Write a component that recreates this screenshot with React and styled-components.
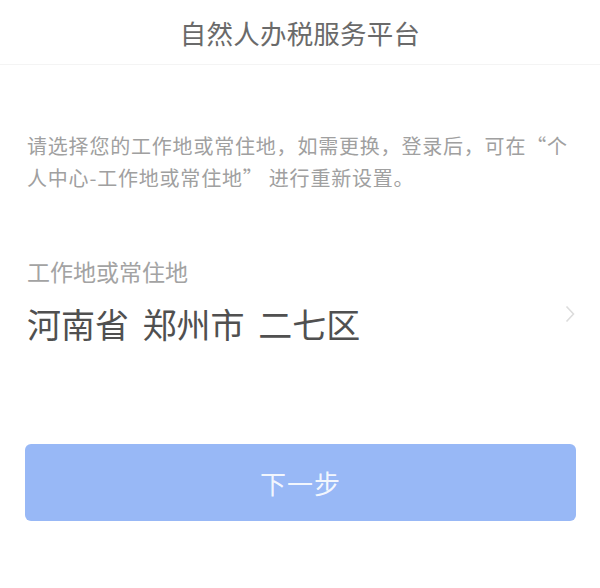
import React from "react";
import styled, { createGlobalStyle } from "styled-components";

const Global = createGlobalStyle`
  html, body {
    margin: 0;
    padding: 0;
    background: #ffffff;
  }
  body {
    font-family: "Noto Sans CJK SC", "Noto Sans", sans-serif;
  }
`;

const Page = styled.div`
  width: 600px;
  min-height: 588px;
  background: #fff;
  display: flex;
  flex-direction: column;
`;

const Header = styled.header`
  height: 64px;
  display: flex;
  align-items: center;
  justify-content: center;
  border-bottom: 1px solid #f4f4f4;
`;

const Title = styled.h1`
  margin: 0;
  font-size: 26.5px;
  font-weight: 400;
  color: #6a6a6a;
  letter-spacing: 0.2px;
`;

const Notice = styled.p`
  margin: 65px 25px 0 27px;
  font-size: 20px;
  letter-spacing: 0.8px;
  line-height: 32px;
  color: #a0a0a0;
`;

const Field = styled.section`
  margin-top: 62px;
  padding: 0 25px 0 27px;
  display: flex;
  flex-direction: column;
`;

const FieldLabel = styled.div`
  font-size: 23px;
  line-height: 30px;
  color: #a3a3a3;
`;

const FieldRow = styled.div`
  margin-top: 16px;
  display: flex;
  align-items: center;
  justify-content: space-between;
`;

const FieldValue = styled.div`
  font-size: 34px;
  line-height: 44px;
  font-weight: 400;
  color: #505050;
  word-spacing: 6px;
`;

const Chevron = styled.svg`
  width: 10px;
  height: 18px;
  margin-top: -20px;
`;

const NextButton = styled.button`
  margin: 98px 24px 0 25px;
  height: 77px;
  border: none;
  border-radius: 6px;
  background: #98b8f6;
  color: rgba(255, 255, 255, 0.9);
  font-family: inherit;
  font-size: 26px;
  letter-spacing: 1px;
  cursor: pointer;
`;

export default function App() {
  return (
    <Page>
      <Global />
      <Header>
        <Title>自然人办税服务平台</Title>
      </Header>
      <Notice>
        请选择您的工作地或常住地，如需更换，登录后，可在“个人中心-工作地或常住地” 进行重新设置。
      </Notice>
      <Field>
        <FieldLabel>工作地或常住地</FieldLabel>
        <FieldRow>
          <FieldValue>河南省 郑州市 二七区</FieldValue>
          <Chevron viewBox="0 0 10 18">
            <path d="M1.5 1.5 L8.5 9 L1.5 16.5" fill="none" stroke="#dcdcdc" strokeWidth="1.6" />
          </Chevron>
        </FieldRow>
      </Field>
      <NextButton>下一步</NextButton>
    </Page>
  );
}
